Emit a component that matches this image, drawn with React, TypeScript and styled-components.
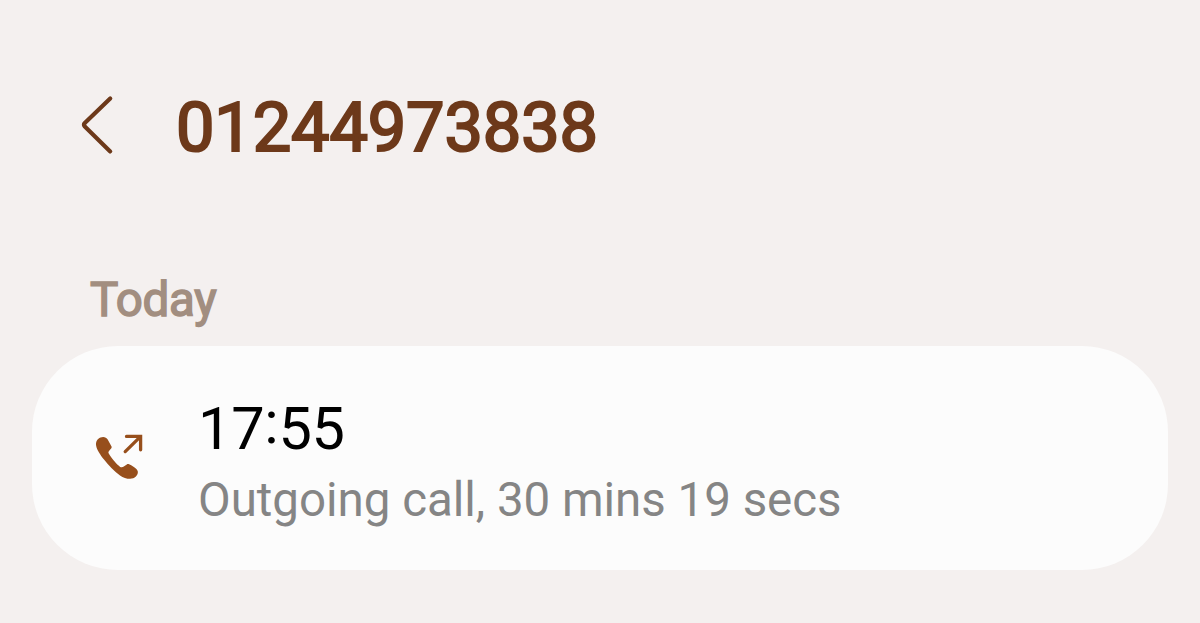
import { createGlobalStyle, styled } from 'styled-components';

const GlobalStyle = createGlobalStyle`
  * {
    box-sizing: border-box;
  }
  body {
    margin: 0;
    background: #f4f0ef;
    font-family: Roboto, 'Liberation Sans', sans-serif;
  }
`;

const Screen = styled.main`
  height: 623px;
  padding: 0 32px;
  overflow: hidden;
`;

const Header = styled.header`
  display: flex;
  align-items: center;
  height: 250px;
  padding-left: 48px;
`;

const BackButton = styled.button`
  display: flex;
  width: 34px;
  height: 60px;
  margin-right: 62px;
  padding: 0;
  border: 0;
  background: none;
`;

const PhoneNumber = styled.h1`
  margin: 6px 0 0;
  color: #6d391a;
  font-size: 68.5px;
  font-weight: 400;
  line-height: 80px;
  letter-spacing: -0.15px;
  -webkit-text-stroke: 2.2px #6d391a;
`;

const DayLabel = styled.h2`
  height: 96px;
  margin: 0;
  padding: 21px 0 0 58px;
  color: #a28e80;
  font-size: 47.5px;
  font-weight: 400;
  line-height: 58px;
  letter-spacing: -0.3px;
  -webkit-text-stroke: 1.5px #a28e80;
`;

const CallCard = styled.section`
  display: flex;
  height: 224px;
  padding: 47px 0 0 62px;
  border-radius: 86px;
  background: #fcfcfc;
`;

const CallIcon = styled.svg`
  flex: none;
  width: 50px;
  height: 50px;
  margin: 39px 54px 0 0;
`;

const CallText = styled.div`
  display: flex;
  flex-direction: column;
`;

const CallTime = styled.span`
  color: #000;
  font-size: 59.5px;
  line-height: 72px;
  letter-spacing: -0.3px;
`;

// Lifts the colon to the middle of the digits
const TimeColon = styled.span`
  position: relative;
  top: -6px;
`;

const CallDetail = styled.span`
  margin-top: 7px;
  color: #858585;
  font-size: 47.5px;
  line-height: 56px;
  letter-spacing: -0.03px;
`;

function OutgoingCallIcon() {
  return (
    <CallIcon viewBox="94 432 50 50" aria-label="Outgoing call">
      <path
        d="M100.5 437.6C97.4 438.8 95.6 441.8 96.1 445.4C96.8 449.9 100.5 455 104 459.6C108.3 465.2 114.2 471.4 120 475.4C125.2 478.9 132.2 480.4 135.9 476.6C138.1 474.3 138.5 471.5 137 469.7C135.7 468.2 131.6 465.4 129.1 464.3C128.2 463.9 127.5 463.9 126.8 464.5L123.8 466.6C122.6 467.4 121.4 467.6 120.2 466.9C116 463.9 111.6 458.2 108.9 453.8C108.2 452.6 108.3 451.8 109 450.9L111.1 448.5C111.8 447.6 111.8 447 111.4 446.2L107.7 439.6C106.3 437.2 103.4 436.5 100.5 437.6Z"
        fill="#974f1c"
      />
      <path
        d="M125.2 451.6L140.4 436.6M126.5 436.4H140.6V449.8"
        fill="none"
        stroke="#974f1c"
        strokeWidth="3.3"
        strokeLinecap="round"
        strokeLinejoin="miter"
      />
    </CallIcon>
  );
}

export default function App() {
  return (
    <>
      <GlobalStyle />
      <Screen>
        <Header>
          <BackButton aria-label="Back">
            <svg width="34" height="60" viewBox="80 95 34 60">
              <path
                d="M110.2 98.4L84.8 123Q83.2 124.8 84.8 126.6L110.2 151.4"
                fill="none"
                stroke="#6d391a"
                strokeWidth="4.2"
                strokeLinecap="round"
                strokeLinejoin="round"
              />
            </svg>
          </BackButton>
          <PhoneNumber>01244973838</PhoneNumber>
        </Header>
        <DayLabel>Today</DayLabel>
        <CallCard>
          <OutgoingCallIcon />
          <CallText>
            <CallTime>
              17<TimeColon>:</TimeColon>55
            </CallTime>
            <CallDetail>Outgoing call, 30 mins 19 secs</CallDetail>
          </CallText>
        </CallCard>
      </Screen>
    </>
  );
}
